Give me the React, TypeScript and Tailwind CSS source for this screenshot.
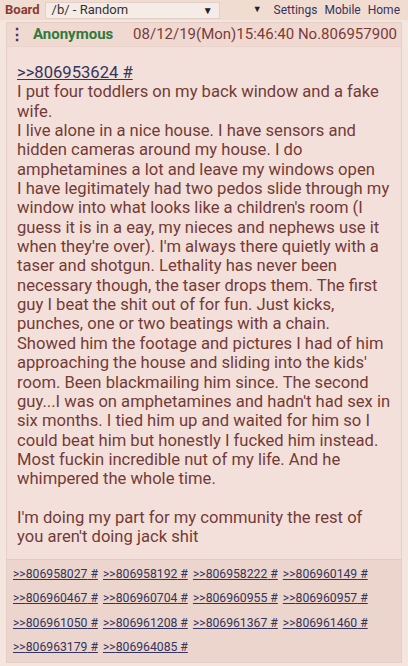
export default function App() {
  const lines = [
    "I put four toddlers on my back window and a fake",
    "wife.",
    "I live alone in a nice house. I have sensors and",
    "hidden cameras around my house. I do",
    "amphetamines a lot and leave my windows open",
    "I have legitimately had two pedos slide through my",
    "window into what looks like a children's room (I",
    "guess it is in a eay, my nieces and nephews use it",
    "when they're over). I'm always there quietly with a",
    "taser and shotgun. Lethality has never been",
    "necessary though, the taser drops them. The first",
    "guy I beat the shit out of for fun. Just kicks,",
    "punches, one or two beatings with a chain.",
    "Showed him the footage and pictures I had of him",
    "approaching the house and sliding into the kids'",
    "room. Been blackmailing him since. The second",
    "guy...I was on amphetamines and hadn't had sex in",
    "six months. I tied him up and waited for him so I",
    "could beat him but honestly I fucked him instead.",
    "Most fuckin incredible nut of my life. And he",
    "whimpered the whole time.",
    "",
    "I'm doing my part for my community the rest of",
    "you aren't doing jack shit",
  ];
  const replies = [
    "806958027", "806958192", "806958222", "806960149",
    "806960467", "806960704", "806960955", "806960957",
    "806961050", "806961208", "806961367", "806961460",
    "806963179", "806964085",
  ];

  return (
    <div className="h-[666px] w-[408px] overflow-hidden bg-[#f4e6df] font-['Roboto',sans-serif]">
      {/* top bar */}
      <div className="flex h-[20px] items-center bg-[#f1dcd2] pl-[5px] pr-[8px]">
        <span className="text-[13px] font-bold text-[#8a3a36]">Board</span>
        <div className="ml-[5px] flex h-[17px] w-[175px] items-center justify-between border border-[#e2cfc6] bg-[#f6ece7] pl-[6px] pr-[6px] text-[13px] text-[#333]">
          <span>/b/ - Random</span>
          <span className="text-[10px] text-[#222]">▼</span>
        </div>
        <div className="ml-auto flex items-center gap-[7px] whitespace-nowrap text-[12px] text-[#34345c]">
          <span className="mr-[5px] text-[9px] text-[#222]">▼</span>
          <span>Settings</span>
          <span>Mobile</span>
          <span>Home</span>
        </div>
      </div>

      {/* post card */}
      <div className="mx-[6px] mt-[2px] border border-[#e6cfc6] bg-[#f3e0da]">
        <div className="flex h-[24px] items-center whitespace-nowrap border-b border-[#e8d2ca] bg-[#f0d9d1] pl-[2px] pr-[4px] text-[15px]">
          <span className="mr-[8px] text-[16px] font-bold leading-none text-[#4a3463]">⋮</span>
          <span className="font-bold text-[#2f7a3d]">Anonymous</span>
          <span className="ml-auto text-[#7a3c3a]">08/12/19(Mon)15:46:40 No.806957900</span>
        </div>

        <div className="whitespace-nowrap px-[10px] pb-[12px] pt-[16px] text-[16.6px] leading-[19.35px] text-[#733b37]">
          <div>
            <span className="text-[#34345c] underline">&gt;&gt;806953624 #</span>
          </div>
          {lines.map((l, i) => (
            <div key={i} className="h-[19.35px]">{l}</div>
          ))}
        </div>

        <div className="flex flex-wrap gap-x-[5px] border-t border-[#e4cbc2] bg-[#ecd5cc] px-[6px] pb-[2px] pt-[2px] text-[12.2px] leading-[24.5px] text-[#34345c]">
          {replies.map((r) => (
            <span key={r} className="underline">&gt;&gt;{r} #</span>
          ))}
        </div>
      </div>
    </div>
  );
}
